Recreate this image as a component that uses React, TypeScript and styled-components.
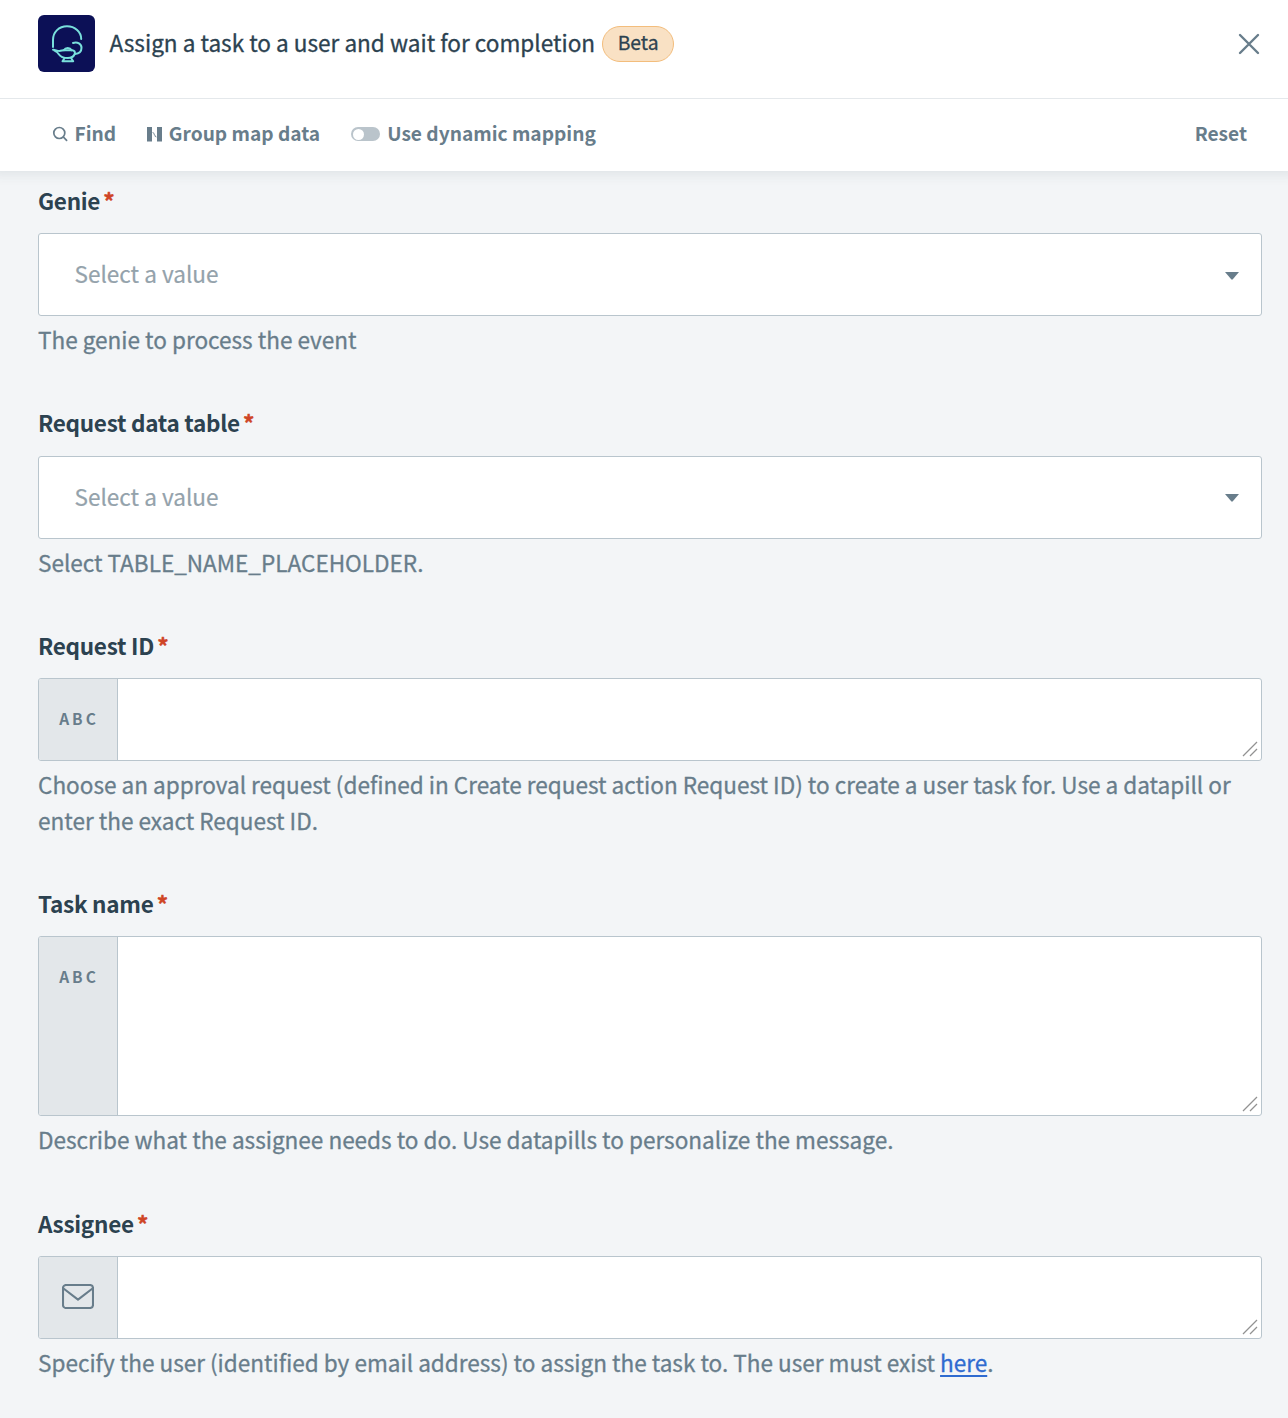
import React from 'react';
import styled, { createGlobalStyle } from 'styled-components';

const GlobalStyle = createGlobalStyle`
  * { box-sizing: border-box; }
  body {
    margin: 0;
    background: #f3f5f7;
    font-family: "Noto Sans CJK SC", "Noto Sans", sans-serif;
    color: #2c4250;
  }
`;

const Panel = styled.div`
  width: 1288px;
  height: 1418px;
  overflow: hidden;
  display: flex;
  flex-direction: column;
`;

const Header = styled.header`
  flex: none;
  position: relative;
  z-index: 2;
  height: 99px;
  padding: 15px 27px 0 38px;
  display: flex;
  align-items: flex-start;
  background: #fff;
  border-bottom: 1px solid #e4e8eb;
`;

const Logo = styled.svg`
  flex: none;
  width: 57px;
  height: 57px;
  margin-right: 14.5px;
`;

const Title = styled.h1`
  margin: 0;
  font-size: 22.57px;
  font-weight: 400;
  line-height: 55px;
  white-space: nowrap;
  -webkit-text-stroke: 0.3px currentColor;
`;

const Badge = styled.span`
  height: 36px;
  margin: 11px 0 0 7px;
  padding: 0 14.6px;
  border: 1px solid #f3bd7c;
  border-radius: 18px;
  background: #f9e1c4;
  font-size: 19.3px;
  line-height: 30px;
  -webkit-text-stroke: 0.3px currentColor;
`;

const CloseButton = styled.button`
  margin: 17px 0 0 auto;
  padding: 0;
  border: 0;
  background: none;
  width: 24px;
  height: 24px;
`;

const Toolbar = styled.nav`
  flex: none;
  position: relative;
  z-index: 1;
  height: 72px;
  padding: 0 41px 2px 52px;
  display: flex;
  align-items: center;
  background: #fff;
  box-shadow: 0 -7px 12px 10px rgba(44, 66, 80, 0.1);
`;

const Tool = styled.button<{ $gap: number; $push?: boolean }>`
  display: flex;
  align-items: center;
  gap: ${(p) => p.$gap}px;
  margin: 0 ${(p) => (p.$push ? 0 : 30.7)}px 0 ${(p) => (p.$push ? 'auto' : '0')};
  padding: 0;
  border: 0;
  background: none;
  color: #687d8b;
  font-family: inherit;
  font-size: 19.15px;
  font-weight: 700;
  line-height: 28px;
  white-space: nowrap;
`;

const ToolText = styled.span`
  margin-top: -2px;
`;

const Switch = styled.span`
  width: 29px;
  height: 14px;
  padding: 1.5px 2px;
  border-radius: 7px;
  background: #bac4cb;
`;

const Knob = styled.span`
  display: block;
  width: 11px;
  height: 11px;
  border-radius: 50%;
  background: #fff;
`;

const Form = styled.main`
  flex: 1;
  padding: 10.9px 26px 0 38px;
`;

const Field = styled.section`
  margin-bottom: 46.5px;
`;

const Label = styled.div`
  height: 36px;
  margin-bottom: 15.3px;
  font-size: 22.5px;
  font-weight: 700;
  letter-spacing: -0.28px;
  line-height: 36px;
  white-space: nowrap;
`;

const Required = styled.span`
  margin-left: 3.2px;
  color: #cf4526;
  -webkit-text-stroke: 0.4px currentColor;
`;

const Control = styled.div<{ $height?: number }>`
  height: ${(p) => p.$height ?? 83}px;
  display: flex;
  border: 1px solid #b9c5cd;
  border-radius: 3px;
  background: #fff;
  overflow: hidden;
`;

const Placeholder = styled.span`
  flex: 1;
  padding-left: 35.5px;
  color: #94a2ab;
  font-size: 22.57px;
  line-height: 79px;
  -webkit-text-stroke: 0.2px currentColor;
`;

const Caret = styled.svg`
  margin: 37.7px 22px 0 0;
  width: 14px;
  height: 8px;
`;

const TypeCell = styled.div`
  flex: none;
  width: 79px;
  height: 100%;
  padding: 1px 0 0 2px;
  display: flex;
  justify-content: center;
  background: #e3e7ea;
  border-right: 1px solid #b9c5cd;
  color: #687d8b;
  font-size: 15.5px;
  font-weight: 700;
  letter-spacing: 3px;
  line-height: 76px;
`;

const MailIcon = styled.svg`
  width: 32px;
  height: 25px;
  margin: 26.6px 2px 0 0;
`;

const Resize = styled.svg`
  margin: auto 3px 3px auto;
  width: 16px;
  height: 16px;
`;

const Help = styled.p`
  margin: 6px 0 0;
  color: #687d8b;
  font-size: 22.56px;
  line-height: 35.7px;
  -webkit-text-stroke: 0.3px currentColor;
`;

const Link = styled.a`
  color: #2f6bd0;
  text-decoration: underline;
  text-decoration-thickness: 2px;
  text-underline-offset: 3px;
`;

const Select = () => (
  <Control>
    <Placeholder>Select a value</Placeholder>
    <Caret viewBox="0 0 14 8"><path d="M0 0H14L7.8 7.3Q7 8 6.2 7.3Z" fill="#687d8b" /></Caret>
  </Control>
);

const TextInput = ({ height, icon }: { height?: number; icon?: React.ReactNode }) => (
  <Control $height={height}>
    <TypeCell>{icon ?? 'ABC'}</TypeCell>
    <Resize viewBox="0 0 16 16" stroke="#929292" strokeWidth="1.3">
      <path d="M1 15L15 1M8 15L15 8" />
    </Resize>
  </Control>
);

const FormField = ({ label, help, children }: { label: string; help: React.ReactNode; children: React.ReactNode }) => (
  <Field>
    <Label>{label}<Required>*</Required></Label>
    {children}
    <Help>{help}</Help>
  </Field>
);

const Envelope = () => (
  <MailIcon viewBox="0 0 32 25" fill="none" stroke="#687d8b" strokeWidth="2.1" strokeLinejoin="round">
    <rect x="1" y="1" width="30" height="23" rx="3" />
    <path d="M1.5 4.5L16 15.7L30.5 4.5" />
  </MailIcon>
);

export default function App() {
  return (
    <Panel>
      <GlobalStyle />
      <Header>
        <Logo viewBox="0 0 57 57" fill="none" stroke="#79e0dc" strokeWidth="2" strokeLinecap="round" strokeLinejoin="round">
          <rect width="57" height="57" rx="6" fill="#0c1056" stroke="none" />
          <path d="M15 32V25C15 17 21 11.3 29 11.3S43.2 17 43.2 24" />
          <path d="M35 28C39.5 26.3 43.5 29 43.5 32.7C43.5 36.5 40.5 38.6 37 39" />
          <path d="M15 34.7C18 35 20 36.3 22.5 35.8L25.5 35.2H34C36.5 35.2 37.3 37 36.7 39C35.6 41.7 33 43 29.8 43C25.5 43 22.5 41.8 20.8 39.2C19.4 37 17.5 36 15 34.7Z" />
          <path d="M25.8 35.2C27.5 32.4 32 32.4 33.7 35.2M26.5 43.2L24.5 46.2H35.2L33.2 43.2" />
        </Logo>
        <Title>Assign a task to a user and wait for completion</Title>
        <Badge>Beta</Badge>
        <CloseButton aria-label="Close">
          <svg width="24" height="24" viewBox="0 0 24 24" stroke="#687d8b" strokeWidth="2.4" strokeLinecap="round">
            <path d="M3 3L21 21M21 3L3 21" />
          </svg>
        </CloseButton>
      </Header>
      <Toolbar>
        <Tool $gap={6.5}>
          <svg width="16" height="16" viewBox="0 0 16 16" fill="none" stroke="#687d8b" strokeWidth="1.7" strokeLinecap="round">
            <circle cx="7.3" cy="7" r="5.5" />
            <path d="M11.5 11.2L14.6 14.3" />
          </svg>
          <ToolText>Find</ToolText>
        </Tool>
        <Tool $gap={7}>
          <svg width="15" height="16" viewBox="0 0 15 16" fill="#687d8b">
            <path d="M0 1H5V15.5H0ZM10 1H15V15.5H10Z" />
            <path d="M5.5 6.5L7 7.2V8.5L8 9V10.3L9.5 11" fill="none" stroke="#687d8b" strokeWidth=".8" />
          </svg>
          <ToolText>Group map data</ToolText>
        </Tool>
        <Tool $gap={7.4}>
          <Switch><Knob /></Switch>
          <ToolText>Use dynamic mapping</ToolText>
        </Tool>
        <Tool $gap={0} $push><ToolText>Reset</ToolText></Tool>
      </Toolbar>
      <Form>
        <FormField label="Genie" help="The genie to process the event"><Select /></FormField>
        <FormField label="Request data table" help="Select TABLE_NAME_PLACEHOLDER."><Select /></FormField>
        <FormField
          label="Request ID"
          help="Choose an approval request (defined in Create request action Request ID) to create a user task for. Use a datapill or enter the exact Request ID."
        >
          <TextInput />
        </FormField>
        <FormField label="Task name" help="Describe what the assignee needs to do. Use datapills to personalize the message.">
          <TextInput height={180} />
        </FormField>
        <FormField
          label="Assignee"
          help={<>Specify the user (identified by email address) to assign the task to. The user must exist <Link>here</Link>.</>}
        >
          <TextInput icon={<Envelope />} />
        </FormField>
      </Form>
    </Panel>
  );
}
